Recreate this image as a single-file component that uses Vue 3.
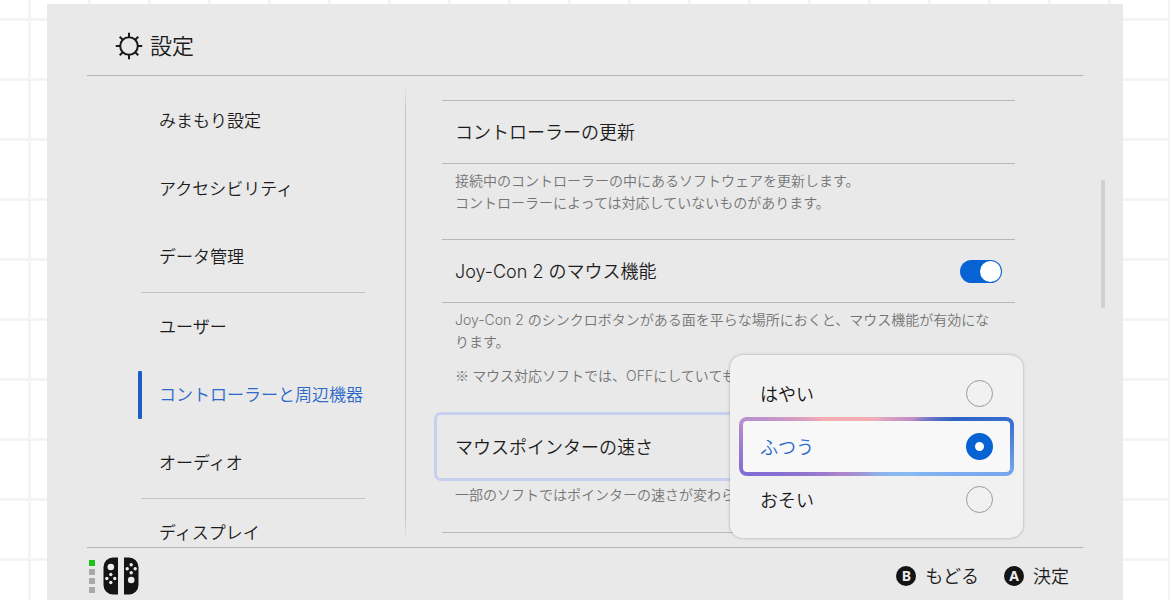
<script setup>
import { ref } from 'vue'

const navGroups = [
  ['みまもり設定', 'アクセシビリティ', 'データ管理'],
  ['ユーザー', 'コントローラーと周辺機器', 'オーディオ'],
  ['ディスプレイ'],
]
const activeNav = ref('コントローラーと周辺機器')

const mouseEnabled = ref(true)
const speeds = ['はやい', 'ふつう', 'おそい']
const speed = ref('ふつう')
</script>

<template>
  <div class="page">
    <div class="panel">
      <header class="header">
        <svg class="gear" viewBox="0 0 28 28" width="28" height="28" fill="none" stroke="#1a1a1a" stroke-width="2" aria-hidden="true">
          <circle cx="14" cy="14" r="8.8" />
          <path d="M14 5.200V.8M14 22.800v4.400M5.200 14H.8M22.800 14h4.400M7.800 7.800 4.700 4.700M20.200 7.800l3.100-3.100M7.800 20.200l-3.100 3.100M20.200 20.200l3.100 3.100" />
        </svg>
        <h1>設定</h1>
      </header>

      <div class="main">
        <nav class="nav">
          <div v-for="(group, i) in navGroups" :key="i" class="group">
            <button
              v-for="item in group"
              :key="item"
              type="button"
              class="nav-item"
              :class="{ active: item === activeNav }"
              @click="activeNav = item"
            >{{ item }}</button>
          </div>
        </nav>
        <div class="divider"></div>

        <main class="content">
          <section>
            <button type="button" class="row"><span class="label">コントローラーの更新</span></button>
            <div class="desc">
              <p>接続中のコントローラーの中にあるソフトウェアを更新します。<br />コントローラーによっては対応していないものがあります。</p>
            </div>
          </section>

          <section>
            <label class="row">
              <span class="label">Joy-Con 2 のマウス機能</span>
              <input v-model="mouseEnabled" type="checkbox" role="switch" class="switch" />
            </label>
            <div class="desc">
              <p>Joy-Con 2 のシンクロボタンがある面を平らな場所におくと、マウス機能が有効になります。</p>
              <p><span class="mark">※ </span>マウス対応ソフトでは、OFFにしていても</p>
            </div>
          </section>

          <section>
            <div class="row focus">
              <span id="speed-label" class="label">マウスポインターの速さ</span>
              <div class="popup" role="radiogroup" aria-labelledby="speed-label">
                <label v-for="s in speeds" :key="s" class="option" :class="{ selected: s === speed }">
                  <span class="label">{{ s }}</span>
                  <input v-model="speed" type="radio" name="speed" :value="s" />
                </label>
              </div>
            </div>
            <div class="desc tight">
              <p>一部のソフトではポインターの速さが変わら</p>
            </div>
          </section>
          <section class="next"></section>
        </main>

        <div class="track"><div class="thumb"></div></div>
      </div>

      <footer class="footer">
        <div class="players">
          <div class="leds"><i class="on"></i><i></i><i></i><i></i></div>
          <svg viewBox="0 0 36 38" width="36" height="38" aria-hidden="true">
            <path fill="#141414" d="M15 .5V37.500H10A9.500 9.500 0 0 1 .5 28V10A9.500 9.500 0 0 1 10 .5ZM21 .5h5A9.500 9.500 0 0 1 35.500 10v18a9.500 9.500 0 0 1-9.500 9.500H21Z" />
            <g fill="#ececec">
              <circle cx="7.800" cy="10" r="3.300" />
              <circle cx="7.800" cy="17.500" r="1.700" /><circle cx="7.800" cy="25.500" r="1.700" />
              <circle cx="3.800" cy="21.500" r="1.700" /><circle cx="11.800" cy="21.500" r="1.700" />
              <circle cx="28.200" cy="23" r="3.300" />
              <circle cx="28.200" cy="7.700" r="1.700" /><circle cx="28.200" cy="15.700" r="1.700" />
              <circle cx="24.200" cy="11.700" r="1.700" /><circle cx="32.200" cy="11.700" r="1.700" />
            </g>
          </svg>
        </div>
        <div class="actions">
          <button type="button"><b>B</b><span class="label">もどる</span></button>
          <button type="button"><b>A</b><span class="label">決定</span></button>
        </div>
      </footer>
    </div>
  </div>
</template>

<style>
body {
  margin: 0;
  overflow: hidden;
}
</style>

<style scoped>
.page {
  box-sizing: border-box;
  height: 100vh;
  padding: 4px 47px 0;
  background-color: #fff;
  background-image:
    linear-gradient(90deg, transparent 28px, #f4f4f4 28px, #f4f4f4 31px, transparent 31px),
    linear-gradient(transparent 18px, #f4f4f4 18px, #f4f4f4 21px, transparent 21px);
  background-size: 60px 60px;
  color: #1c1c1c;
  font-family: Inter, "Noto Sans CJK JP", sans-serif;
  font-size: 18px;
  font-weight: 350;
}

button {
  margin: 0;
  padding: 0;
  border: 0;
  background: none;
  color: inherit;
  font: inherit;
  text-align: left;
  cursor: pointer;
}

input {
  margin: 0;
  appearance: none;
  cursor: pointer;
}

p {
  margin: 0;
}

.label {
  padding-bottom: 2px;
}

.panel {
  display: flex;
  flex-direction: column;
  height: 100%;
  background: #e9e9e9;
}

.header {
  display: flex;
  align-items: center;
  gap: 7px;
  height: 71px;
  margin: 0 40px;
  padding-left: 28px;
  border-bottom: 1px solid #b4b4b4;
}

.gear {
  margin-top: 12px;
}

h1 {
  margin: 12px 0 0;
  font-size: 22px;
  font-weight: 350;
  line-height: 32px;
}

.main {
  display: flex;
  flex: 1;
  min-height: 0;
  padding: 0 18px 0 94px;
  overflow: hidden;
}

.nav {
  flex: none;
  width: 224px;
  padding-top: 11px;
}

.group {
  padding-bottom: 1px;
}

.group + .group {
  border-top: 1px solid #c2c2c2;
}

.nav-item {
  position: relative;
  display: block;
  width: 100%;
  height: 68px;
  padding: 0 0 3px 18px;
  font-size: 17px;
}

.nav-item.active {
  color: #2b68c9;
}

.nav-item.active::before {
  content: "";
  position: absolute;
  top: 10px;
  left: -3px;
  width: 4px;
  height: 48px;
  border-radius: 1px;
  background: #1c5fc4;
}

.divider {
  flex: none;
  width: 1px;
  margin: 10px 36px 6px 40px;
  background: linear-gradient(transparent, #c4c4c4 24px, #c4c4c4 calc(100% - 24px), transparent);
}

.content {
  flex: 1;
  min-width: 0;
  padding-top: 24px;
}

.row {
  box-sizing: border-box;
  display: flex;
  align-items: center;
  justify-content: space-between;
  width: 100%;
  height: 64px;
  padding: 0 13px;
  border-top: 1px solid #b8b8b8;
  border-bottom: 1px solid #b8b8b8;
}

.desc {
  padding: 6px 20px 25px 13px;
  color: #747474;
  font-size: 14px;
  line-height: 22px;
}

.desc p + p {
  margin-top: 12px;
}

.desc.tight {
  padding: 3px 20px 26px 13px;
}

.mark {
  font-family: "Noto Sans CJK JP", sans-serif;
  line-height: 1;
}

.next {
  border-top: 1px solid #b8b8b8;
}

.switch {
  box-sizing: border-box;
  display: flex;
  width: 42px;
  height: 23px;
  padding: 1px;
  border-radius: 12px;
  background: #a8a8a8;
}

.switch::before {
  content: "";
  width: 21px;
  height: 21px;
  border-radius: 50%;
  background: #fff;
}

.switch:checked {
  justify-content: flex-end;
  background: #0763d4;
}

.focus {
  position: relative;
  width: auto;
  height: 69px;
  margin: 0 -8px;
  padding: 0 18px;
  border: 3px solid #c6d0ee;
  border-radius: 7px;
}

.popup {
  position: absolute;
  top: -60px;
  right: -3px;
  box-sizing: border-box;
  width: 293px;
  padding: 12px 9px;
  border-radius: 13px;
  background: #f1f1f1;
  box-shadow: 0 0 3px rgba(0, 0, 0, 0.3);
}

.option {
  box-sizing: border-box;
  display: flex;
  align-items: center;
  justify-content: space-between;
  height: 53px;
  padding: 0 17px;
  border: 0 solid transparent;
  border-width: 0 4px;
  color: #141414;
  cursor: pointer;
}

.option.selected {
  height: 59px;
  margin: -3px 0;
  border-width: 4px;
  border-radius: 8px;
  background:
    linear-gradient(#f8f8f8, #f8f8f8) padding-box,
    conic-gradient(
      #e9aebf, #c58fc4 52deg, #2c62c6 71deg, #3a70d0 80deg, #7aa6ee 102deg,
      #86bdf2 130deg, #8eaee8 180deg, #ad84c8 234deg, #806cd4 258deg,
      #b98fce 282deg, #f7acb2 297deg, #f7acb2 340deg, #e9aebf
    ) border-box;
  color: #2b68c9;
}

.option input {
  box-sizing: border-box;
  width: 27px;
  height: 27px;
  border: 1px solid #9a9a9a;
  border-radius: 50%;
}

.option input:checked {
  border: 9px solid #0763d4;
  background: #fff;
}

.track {
  flex: none;
  width: 4px;
  margin-left: 86px;
  padding-top: 104px;
}

.thumb {
  height: 128px;
  border-radius: 2px;
  background: #d0d0d0;
}

.footer {
  box-sizing: border-box;
  display: flex;
  flex: none;
  align-items: center;
  justify-content: space-between;
  height: 53px;
  margin: 0 40px;
  padding: 4px 14px 0 2px;
  border-top: 1px solid #b4b4b4;
}

.players {
  display: flex;
  align-items: center;
  gap: 8px;
}

.leds {
  display: grid;
  gap: 3px;
}

.leds i {
  width: 6px;
  height: 6px;
  background: #a9a9a9;
}

.leds .on {
  background: #1fc41a;
}

.actions {
  display: flex;
  gap: 25px;
}

.actions button {
  display: flex;
  align-items: center;
  gap: 9px;
}

.actions b {
  width: 20px;
  height: 20px;
  border-radius: 50%;
  background: #141414;
  color: #ececec;
  font: bold 14px/20px "Noto Sans", sans-serif;
  text-align: center;
}
</style>
